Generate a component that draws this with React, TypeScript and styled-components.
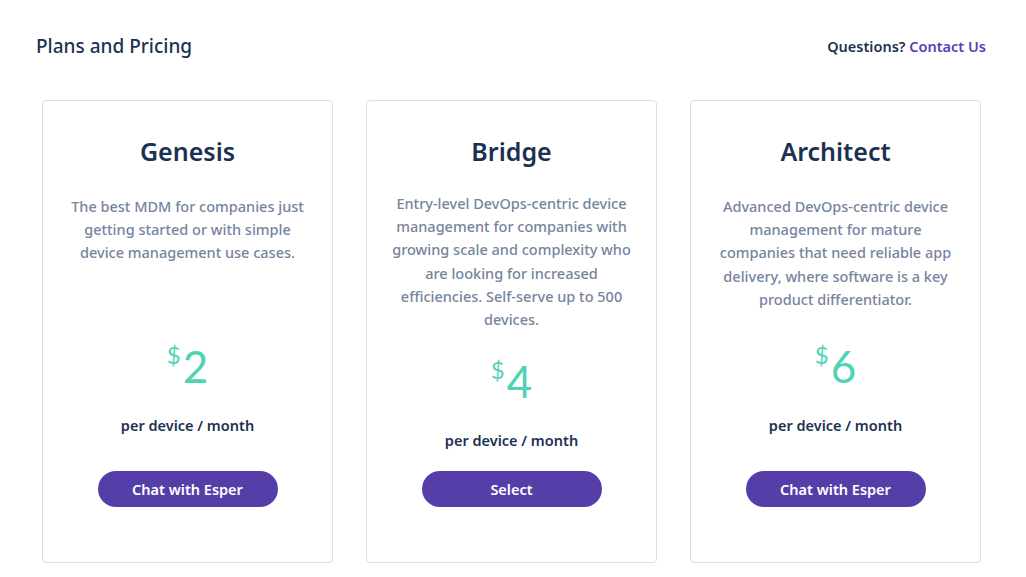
import React from 'react';
import styled, {createGlobalStyle} from 'styled-components';

const GlobalStyle = createGlobalStyle`
  html, body {
    margin: 0;
    padding: 0;
    background: #ffffff;
  }
  body {
    font-family: 'Noto Sans', 'Open Sans', sans-serif;
    color: #1c3152;
  }
`;

const Page = styled.div`
  width: 1026px;
  height: 577px;
  box-sizing: border-box;
  padding: 33px 40px 0 36px;
  overflow: hidden;
`;

const TopBar = styled.div`
  display: flex;
  justify-content: space-between;
  align-items: center;
  height: 26px;
`;

const PageTitle = styled.h1`
  margin: 0;
  font-size: 19px;
  font-weight: 500;
  color: #1c3152;
`;

const Questions = styled.div`
  font-size: 14.5px;
  font-weight: 600;
  color: #1c3152;
`;

const ContactLink = styled.a`
  color: #5a3fb6;
  text-decoration: none;
  cursor: pointer;
`;

const Cards = styled.div`
  display: flex;
  gap: 33px;
  margin-top: 41px;
  padding-left: 6px;
`;

const Card = styled.div`
  width: 291px;
  height: 463px;
  box-sizing: border-box;
  border: 1px solid #dddee4;
  border-radius: 4px;
  padding: 32px 20px 55px;
  display: flex;
  flex-direction: column;
  align-items: center;
  text-align: center;
`;

const PlanName = styled.h2`
  margin: 0;
  font-size: 25px;
  font-weight: 600;
  line-height: 36px;
  color: #1c3152;
`;

const Description = styled.p<{$lift?: number}>`
  margin: ${p => 26 - (p.$lift ?? 0)}px 0 0;
  min-height: 124px;
  font-size: 14.5px;
  font-weight: 500;
  line-height: 23.2px;
  color: #76849e;
`;

const Price = styled.div<{$extra?: number}>`
  margin-top: ${p => 23 + (p.$extra ?? 0)}px;
  display: flex;
  align-items: flex-start;
  color: #4fd3b4;
  font-family: 'Lato', 'Noto Sans', sans-serif;
  font-weight: 400;
`;

const Currency = styled.span`
  font-size: 24px;
  line-height: 22px;
  margin-top: 2px;
  margin-right: 2px;
`;

const Amount = styled.span`
  font-size: 44px;
  line-height: 48px;
`;

const Period = styled.div`
  margin-top: 25px;
  font-size: 14.5px;
  font-weight: 600;
  color: #1c3152;
`;

const ActionButton = styled.button`
  margin-top: auto;
  width: 180px;
  height: 36px;
  border: none;
  border-radius: 18px;
  background: #563ea8;
  color: #ffffff;
  font-family: 'Noto Sans', 'Open Sans', sans-serif;
  font-size: 14.5px;
  font-weight: 600;
  cursor: pointer;
`;

type Plan = {
  name: string;
  lines: string[];
  price: number;
  action: string;
  lift?: number;
  extra?: number;
};

const plans: Plan[] = [
  {
    name: 'Genesis',
    lines: [
      'The best MDM for companies just',
      'getting started or with simple',
      'device management use cases.',
    ],
    price: 2,
    action: 'Chat with Esper',
  },
  {
    name: 'Bridge',
    lines: [
      'Entry-level DevOps-centric device',
      'management for companies with',
      'growing scale and complexity who',
      'are looking for increased',
      'efficiencies. Self-serve up to 500',
      'devices.',
    ],
    price: 4,
    action: 'Select',
    lift: 3,
    extra: 3,
  },
  {
    name: 'Architect',
    lines: [
      'Advanced DevOps-centric device',
      'management for mature',
      'companies that need reliable app',
      'delivery, where software is a key',
      'product differentiator.',
    ],
    price: 6,
    action: 'Chat with Esper',
  },
];

const PlanCard = ({plan}: {plan: Plan}) => (
  <Card>
    <PlanName>{plan.name}</PlanName>
    <Description $lift={plan.lift}>
      {plan.lines.map((line, i) => (
        <React.Fragment key={i}>
          {line}
          {i < plan.lines.length - 1 && <br />}
        </React.Fragment>
      ))}
    </Description>
    <Price $extra={plan.extra}>
      <Currency>$</Currency>
      <Amount>{plan.price}</Amount>
    </Price>
    <Period>per device / month</Period>
    <ActionButton>{plan.action}</ActionButton>
  </Card>
);

export default function App() {
  return (
    <>
      <GlobalStyle />
      <Page>
        <TopBar>
          <PageTitle>Plans and Pricing</PageTitle>
          <Questions>
            Questions? <ContactLink>Contact Us</ContactLink>
          </Questions>
        </TopBar>
        <Cards>
          {plans.map(plan => (
            <PlanCard key={plan.name} plan={plan} />
          ))}
        </Cards>
      </Page>
    </>
  );
}
